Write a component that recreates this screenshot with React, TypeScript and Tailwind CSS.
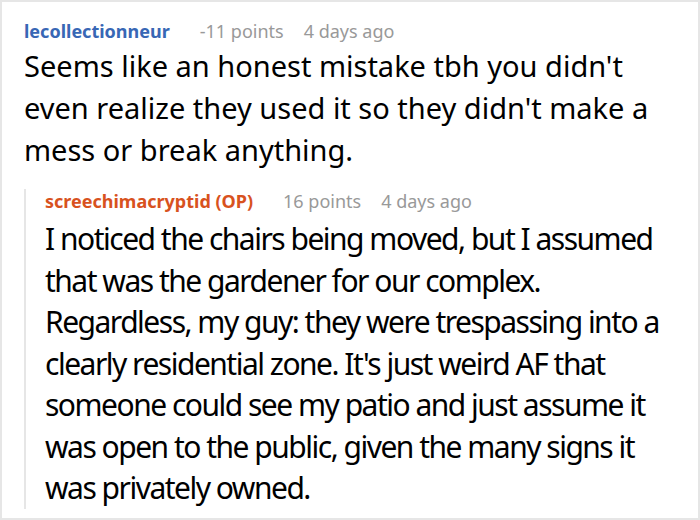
const Meta = ({ name, nameClass, points }: { name: string; nameClass: string; points: string }) => (
  <div className="flex items-baseline text-[18px] leading-[24px]">
    <span className={`font-bold ${nameClass}`}>{name}</span>
    <span className="ml-[30px] text-[#999999]">{points}</span>
    <span className="ml-[20px] text-[#999999]">4 days ago</span>
  </div>
);

export default function App() {
  return (
    <div
      className="h-[520px] w-[700px] overflow-hidden border-2 border-[#e6e6e6] bg-white text-black"
      style={{ fontFamily: '"Noto Sans", "Open Sans", sans-serif' }}
    >
      <div className="pl-[22px] pr-[12px] pt-[17px]">
        <Meta name="lecollectionneur" nameClass="text-[#3867b5]" points="-11 points" />
        <p className="mt-[2px] text-[29px] leading-[42px]">
          Seems like an honest mistake tbh you didn't even realize they used it so they didn't make a mess
          or break anything.
        </p>
        <div className="mt-[18px] flex">
          <div className="w-[2px] shrink-0 bg-[#e6e6e6]" />
          <div className="pl-[19px] pr-[4px]">
            <Meta name="screechimacryptid (OP)" nameClass="text-[#d8521e]" points="16 points" />
            <p className="mt-[5px] text-[30px] leading-[41.5px] tracking-[-1.5px]">
              I noticed the chairs being moved, but I assumed that was the gardener for our complex. Regardless,
              my guy: they were trespassing into a clearly residential zone. It's just weird AF that someone
              could see my patio and just assume it was open to the public, given the many signs it was
              privately owned.
            </p>
          </div>
        </div>
      </div>
    </div>
  );
}
